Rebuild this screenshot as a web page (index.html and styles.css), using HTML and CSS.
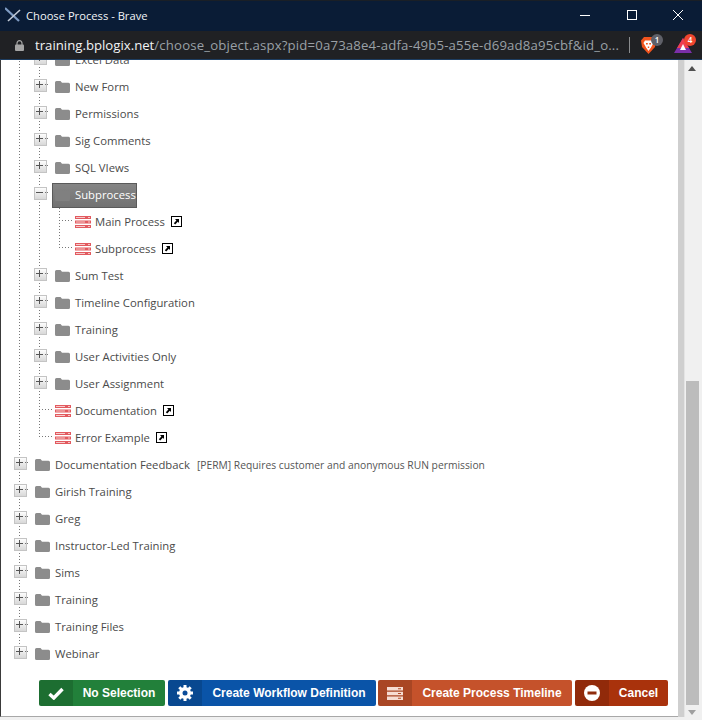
FILE: index.html
```html
<!DOCTYPE html>
<html lang="en">
<head>
<meta charset="utf-8">
<title>Choose Process - Brave</title>
<link rel="stylesheet" href="styles.css">
</head>
<body>
<svg class="defs" width="0" height="0" aria-hidden="true">
  <defs>
    <symbol id="folder" viewBox="0 0 15 12"><path d="M1.5 0H5.5L7 1.8H13.5Q15 1.800 15 3.300V10.500Q15 12 13.500 12H1.500Q0 12 0 10.500V1.500Q0 0 1.500 0Z"/></symbol>
    <symbol id="proc" viewBox="0 0 16 12">
      <rect x="0" y="0" width="16" height="3" fill="#e25a5f"/><rect x="1" y="1" width="9" height="1" fill="#f6caca"/><rect x="13" y="1" width="2" height="1" fill="#f6caca"/>
      <rect x="0" y="4.500" width="16" height="3" fill="#e25a5f"/><rect x="1" y="5.500" width="9" height="1" fill="#f6caca"/><rect x="13" y="5.500" width="2" height="1" fill="#f6caca"/>
      <rect x="0" y="9" width="16" height="3" fill="#e25a5f"/><rect x="1" y="10" width="9" height="1" fill="#f6caca"/><rect x="13" y="10" width="2" height="1" fill="#f6caca"/>
    </symbol>
    <symbol id="link" viewBox="0 0 11 11">
      <rect x=".5" y=".5" width="10" height="10" fill="#fff" stroke="#000"/>
      <path d="M4 3H8V7L6.800 5.800 4.200 8.600 2.800 7.200 5.400 4.400Z" fill="#000"/>
    </symbol>
  </defs>
</svg>
<div class="window">
  <header class="titlebar">
    <svg class="appicon" viewBox="0 0 16 16"><path d="M0 1L14 14" stroke="#7f9cc4" stroke-width="2.200"/><path d="M15 3L3 14" stroke="#c4ccd8" stroke-width="1.600"/></svg>
    <span class="title">Choose Process - Brave</span>
    <span class="winbtn min"><svg viewBox="0 0 10 10"><path d="M0 5.500H10" stroke="#fff"/></svg></span>
    <span class="winbtn max"><svg viewBox="0 0 10 10"><rect x=".5" y=".5" width="9" height="9" fill="none" stroke="#fff"/></svg></span>
    <span class="winbtn close"><svg viewBox="0 0 10 10"><path d="M0 0L10 10M10 0L0 10" stroke="#fff"/></svg></span>
  </header>
  <div class="addressbar">
    <svg class="lock" viewBox="0 0 9 11"><path d="M2 5V3.200a2.500 2.500 0 0 1 5 0V5" fill="none" stroke="#a5a5a5" stroke-width="1.200"/><rect x="0" y="4.500" width="9" height="6.500" rx="1" fill="#a5a5a5"/></svg>
    <div class="url"><span class="host">training.bplogix.net</span>/choose_object.aspx?pid=0a73a8e4-adfa-49b5-a55e-d69ad8a95cbf&amp;id_o...</div>
    <span class="sep"></span>
    <span class="ext shield">
      <svg viewBox="0 0 15 17"><path d="M3 0H12L15 3.500 14 10 7.500 17 1 10 0 3.500Z" fill="#f1541e"/><path d="M4 3.500H11L12.500 6 10 10.500 7.500 14 5 10.500 2.500 6Z" fill="#fff"/><path d="M5 6H6.800V7.500H5ZM8.200 6H10V7.500H8.200ZM6.800 9.500H8.200V11H6.800Z" fill="#f1541e"/></svg>
      <b class="badge grey">1</b>
    </span>
    <span class="ext tri">
      <svg viewBox="0 0 18 15"><path d="M9 0L18 15H0Z" fill="#7b2fa8"/><path d="M9 0L15 10H3Z" fill="#ef3f4f"/><path d="M9 6L12 12H6Z" fill="#fff"/></svg>
      <b class="badge red">4</b>
    </span>
  </div>
  <div class="content">
    <main class="panel">
      <div class="tree">
        <div class="row"><i class="g"></i><i class="exp plus"></i><svg class="ico fld"><use href="#folder"/></svg><span class="lbl">Excel Data</span></div>
        <div class="row"><i class="g"></i><i class="exp plus"></i><svg class="ico fld"><use href="#folder"/></svg><span class="lbl">New Form</span></div>
        <div class="row"><i class="g"></i><i class="exp plus"></i><svg class="ico fld"><use href="#folder"/></svg><span class="lbl">Permissions</span></div>
        <div class="row"><i class="g"></i><i class="exp plus"></i><svg class="ico fld"><use href="#folder"/></svg><span class="lbl">Sig Comments</span></div>
        <div class="row"><i class="g"></i><i class="exp plus"></i><svg class="ico fld"><use href="#folder"/></svg><span class="lbl">SQL VIews</span></div>
        <div class="row"><i class="g"></i><i class="exp minus"></i><div class="selected"><svg class="ico fld sel"><use href="#folder"/></svg><span class="lbl">Subprocess</span></div></div>
        <div class="row"><i class="g"></i><i class="g"></i><i class="leaf mid"></i><svg class="ico prc"><use href="#proc"/></svg><span class="lbl">Main Process</span><svg class="lnk"><use href="#link"/></svg></div>
        <div class="row"><i class="g"></i><i class="g"></i><i class="leaf end"></i><svg class="ico prc"><use href="#proc"/></svg><span class="lbl">Subprocess</span><svg class="lnk"><use href="#link"/></svg></div>
        <div class="row"><i class="g"></i><i class="exp plus"></i><svg class="ico fld"><use href="#folder"/></svg><span class="lbl">Sum Test</span></div>
        <div class="row"><i class="g"></i><i class="exp plus"></i><svg class="ico fld"><use href="#folder"/></svg><span class="lbl">Timeline Configuration</span></div>
        <div class="row"><i class="g"></i><i class="exp plus"></i><svg class="ico fld"><use href="#folder"/></svg><span class="lbl">Training</span></div>
        <div class="row"><i class="g"></i><i class="exp plus"></i><svg class="ico fld"><use href="#folder"/></svg><span class="lbl">User Activities Only</span></div>
        <div class="row"><i class="g"></i><i class="exp plus"></i><svg class="ico fld"><use href="#folder"/></svg><span class="lbl">User Assignment</span></div>
        <div class="row"><i class="g"></i><i class="leaf mid"></i><svg class="ico prc"><use href="#proc"/></svg><span class="lbl">Documentation</span><svg class="lnk"><use href="#link"/></svg></div>
        <div class="row"><i class="g"></i><i class="leaf end"></i><svg class="ico prc"><use href="#proc"/></svg><span class="lbl">Error Example</span><svg class="lnk"><use href="#link"/></svg></div>
        <div class="row"><i class="exp plus"></i><svg class="ico fld"><use href="#folder"/></svg><span class="lbl">Documentation Feedback</span><span class="note">[PERM] Requires customer and anonymous RUN permission</span></div>
        <div class="row"><i class="exp plus"></i><svg class="ico fld"><use href="#folder"/></svg><span class="lbl">Girish Training</span></div>
        <div class="row"><i class="exp plus"></i><svg class="ico fld"><use href="#folder"/></svg><span class="lbl">Greg</span></div>
        <div class="row"><i class="exp plus"></i><svg class="ico fld"><use href="#folder"/></svg><span class="lbl">Instructor-Led Training</span></div>
        <div class="row"><i class="exp plus"></i><svg class="ico fld"><use href="#folder"/></svg><span class="lbl">Sims</span></div>
        <div class="row"><i class="exp plus"></i><svg class="ico fld"><use href="#folder"/></svg><span class="lbl">Training</span></div>
        <div class="row"><i class="exp plus"></i><svg class="ico fld"><use href="#folder"/></svg><span class="lbl">Training Files</span></div>
        <div class="row"><i class="exp plus last"></i><svg class="ico fld"><use href="#folder"/></svg><span class="lbl">Webinar</span></div>
      </div>
      <div class="actions">
        <button class="btn green"><span class="bi">
          <svg viewBox="0 0 16 13" width="16" height="13"><path d="M1.500 7L5.800 11 14.500 2" fill="none" stroke="#fff" stroke-width="3.400"/></svg>
        </span><span class="bt">No Selection</span></button>
        <button class="btn blue"><span class="bi">
          <svg viewBox="0 0 16 16" width="16" height="16"><circle cx="8" cy="8" r="4.500" fill="none" stroke="#fff" stroke-width="3"/><path d="M8 0V16M0 8H16M2.300 2.300L13.700 13.700M13.700 2.300L2.300 13.700" stroke="#fff" stroke-width="3"/><circle cx="8" cy="8" r="2.500" fill="#0a4c9a"/></svg>
        </span><span class="bt">Create Workflow Definition</span></button>
        <button class="btn orange"><span class="bi">
          <svg viewBox="0 0 16 13" width="16" height="13"><path d="M0 0H16V3.500H0ZM0 4.750H16V8.250H0ZM0 9.500H16V13H0Z" fill="#f6dcd2"/><path d="M11 1.200H14V2.200H11ZM11 6H14V7H11ZM11 10.800H14V11.800H11Z" fill="#b04a28"/></svg>
        </span><span class="bt">Create Process Timeline</span></button>
        <button class="btn red"><span class="bi">
          <svg viewBox="0 0 16 16" width="16" height="16"><circle cx="8" cy="8" r="8" fill="#fff"/><rect x="3.500" y="6.500" width="9" height="3" fill="#8f2c0c"/></svg>
        </span><span class="bt">Cancel</span></button>
      </div>
    </main>
    <div class="gutter"></div>
    <aside class="scrollbar">
      <span class="arrow up"></span>
      <span class="spacer"></span>
      <span class="thumb"></span>
      <span class="arrow down"></span>
    </aside>
  </div>
</div>
</body>
</html>
```

FILE: styles.css
```css
* { box-sizing: border-box; }
html, body { margin: 0; height: 100%; }
body { background: #f0f0f0; font-family: "Open Sans", "Liberation Sans", sans-serif; overflow: hidden; }
.defs { display: block; height: 0; }
.window { width: 702px; height: 720px; display: flex; flex-direction: column; }

.titlebar { height: 31px; flex: none; background: #0a1c36; display: flex; align-items: center; padding: 0 0 2px 5px; color: #f2f4f7; border-top: 1px solid #1a1f26; }
.appicon { width: 16px; height: 16px; flex: none; }
.title { margin-left: 5px; font-size: 11.2px; flex: 1; }
.winbtn { display: flex; width: 46px; justify-content: center; flex: none; }
.winbtn svg { width: 10px; height: 10px; }
.winbtn.min { margin-right: 1px; }
.winbtn.close { margin-right: 1px; }

.addressbar { height: 29px; flex: none; background: #202124; border-bottom: 1px solid #1d3d61; display: flex; align-items: center; padding-left: 15px; }
.lock { width: 9px; height: 11px; flex: none; }
.url { margin-left: 11px; width: 594px; flex: none; font-size: 13.2px; letter-spacing: .16px; color: #9aa0a6; white-space: nowrap; overflow: hidden; }
.host { color: #f1f3f4; letter-spacing: 0; }
.sep { width: 1px; height: 16px; background: #8a8c8e; flex: none; }
.ext { display: flex; position: relative; flex: none; }
.shield { margin-left: 11px; }
.shield svg { width: 15px; height: 17px; }
.tri { margin-left: 18px; }
.tri svg { width: 18px; height: 15px; }
.badge { position: absolute; border-radius: 50%; font-size: 8px; font-weight: 600; text-align: center; color: #fff; width: 12px; height: 12px; line-height: 12px; }
.badge.grey { background: #5f6068; left: 10px; top: -3px; }
.badge.red { background: #f0462e; left: 10px; top: -4px; }

.content { flex: 1; display: flex; min-height: 0; background: #f0f0f0; }
.panel { width: 678px; height: 657px; flex: none; background: #fff; border-left: 1px solid #3a3a3a; border-bottom: 1px solid #a8a8a8; overflow: hidden; display: flex; flex-direction: column; }
.gutter { width: 7px; height: 657px; flex: none; background: #cfcfcf; border-right: 1px solid #e4e4e4; }
.scrollbar { width: 17px; flex: none; display: flex; flex-direction: column; align-items: center; padding-right: 3px; }
.spacer { flex: 1; }
.thumb { width: 13px; height: 324px; background: #bcbcbc; flex: none; }
.arrow { width: 0; height: 0; flex: none; border-left: 4px solid transparent; border-right: 4px solid transparent; }
.arrow.up { border-bottom: 5px solid #505050; margin-top: 6px; }
.arrow.down { border-top: 5px solid #a0a0a0; margin: 5px 0; }

.tree { flex: none; margin-top: -14px; padding-left: 18px; }
.row { height: 27px; display: flex; align-items: center; font-size: 11.3px; color: #4a4a4a; white-space: nowrap; }
.g, .exp, .leaf { width: 20px; height: 27px; flex: none; display: block; }
.g, .exp { background: repeating-linear-gradient(to bottom, #777 0 1px, transparent 1px 3px) 0 0 / 1px 100% no-repeat; }
.exp { position: relative; }
.exp.last { background-size: 1px 50%; }
.exp::before { content: ""; position: absolute; left: -5px; top: 6px; width: 11px; height: 11px; border: 1px solid #c4c4c4; background: linear-gradient(#fdfdfd, #d8d8d8); }
.exp::after { content: ""; position: absolute; left: -3px; top: 8px; width: 13px; height: 7px; background: repeating-linear-gradient(to right, #777 0 1px, transparent 1px 2px) 9px 3px / 4px 1px no-repeat, linear-gradient(#555, #555) 0 3px / 7px 1px no-repeat; }
.exp.plus::after { background: repeating-linear-gradient(to right, #777 0 1px, transparent 1px 2px) 9px 3px / 4px 1px no-repeat, linear-gradient(#555, #555) 3px 0 / 1px 7px no-repeat, linear-gradient(#555, #555) 0 3px / 7px 1px no-repeat; }
.leaf.mid, .leaf.end { background: repeating-linear-gradient(to right, #777 0 1px, transparent 1px 3px) 0 12px / 14px 1px no-repeat, repeating-linear-gradient(to bottom, #777 0 1px, transparent 1px 3px) 0 0 / 1px 100% no-repeat; }
.leaf.end { background-size: 14px 1px, 1px 13px; }

.ico { flex: none; display: block; }
.fld { width: 15px; height: 12px; fill: #8c8c8c; margin: 1px 5px 0 -4px; }
.prc { width: 16px; height: 12px; margin: 1px 4px 0 -4px; }
.lbl { line-height: 16px; }
.lnk { width: 11px; height: 11px; flex: none; margin-left: 6px; }
.note { margin-left: 7px; font-size: 10.3px; color: #555; }
.selected { display: flex; align-items: center; height: 25px; margin: 1px 0 0 -7px; padding-left: 2px; width: 85px; flex: none; background: linear-gradient(#858585, #727272); border: 1px solid #5a5a5a; color: #fff; }
.selected .fld.sel { fill: #808080; margin: 0 5px 0 0; }

.actions { flex: 1; display: flex; align-items: flex-start; padding: 13px 0 0 38px; gap: 3px; }
.btn { height: 26px; padding: 0; border: 0; border-radius: 2px; display: flex; overflow: hidden; color: #fff; font: bold 12px "Liberation Sans", Arial, sans-serif; flex: none; }
.bi { width: 34px; height: 26px; display: flex; align-items: center; justify-content: center; flex: none; background: rgba(0,0,0,.14); }
.bt { flex: 1; line-height: 26px; text-align: center; }
.btn.green { width: 126px; background: #22803a; }
.btn.blue { width: 208px; background: #0a54a8; margin-right: -1px; }
.btn.orange { width: 194px; background: #c5522b; }
.btn.red { width: 93px; background: #a9320c; }
```
